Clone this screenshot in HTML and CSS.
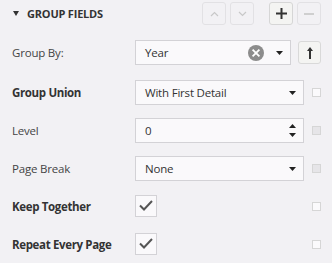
FILE: index.html
```html
<!DOCTYPE html>
<html lang="en">
<head>
    <meta charset="UTF-8">
    <title>Group Fields</title>
    <link rel="stylesheet" href="styles.css">
</head>
<body>
    <div class="panel">
        <div class="panel-header">
            <div class="panel-title">
                <svg class="collapse" width="6" height="5" viewBox="0 0 6 5"><path d="M0 0H6L3 5Z" fill="#333"/></svg>
                <span>GROUP FIELDS</span>
            </div>
            <div class="tools">
                <button class="tool-btn" disabled>
                    <svg width="9" height="6" viewBox="0 0 9 6"><path d="M1 5L4.5 1.5L8 5" fill="none" stroke="#c8c8c8" stroke-width="1.2"/></svg>
                </button>
                <button class="tool-btn" disabled>
                    <svg width="9" height="6" viewBox="0 0 9 6"><path d="M1 1L4.5 4.5L8 1" fill="none" stroke="#c8c8c8" stroke-width="1.2"/></svg>
                </button>
                <button class="tool-btn active gap-left">
                    <svg width="11" height="11" viewBox="0 0 11 11"><path d="M5.5 0V11M0 5.5H11" stroke="#333" stroke-width="2"/></svg>
                </button>
                <button class="tool-btn" disabled>
                    <svg width="10" height="2" viewBox="0 0 10 2"><path d="M0 1H10" stroke="#cfcfcf" stroke-width="2"/></svg>
                </button>
            </div>
        </div>

        <div class="row first">
            <label class="field-label">Group By:</label>
            <div class="control combo">
                <span class="value">Year</span>
                <svg class="clear" width="16" height="16" viewBox="0 0 16 16"><circle cx="8" cy="8" r="8" fill="#8c8c8c"/><path d="M4.6 4.6L11.4 11.4M11.4 4.6L4.6 11.4" stroke="#fff" stroke-width="1.8"/></svg>
                <svg class="caret" width="7" height="4" viewBox="0 0 7 4"><path d="M0 0H7L3.5 4Z" fill="#222"/></svg>
            </div>
            <button class="sort-btn">
                <svg width="6" height="12" viewBox="0 0 6 12"><path d="M3 0L6 4H4V12H2V4H0Z" fill="#333"/></svg>
            </button>
        </div>

        <div class="row second">
            <label class="field-label bold">Group Union</label>
            <div class="control select">
                <span class="value">With First Detail</span>
                <svg class="caret" width="7" height="4" viewBox="0 0 7 4"><path d="M0 0H7L3.5 4Z" fill="#222"/></svg>
            </div>
            <span class="mini-check"></span>
        </div>

        <div class="row">
            <label class="field-label">Level</label>
            <div class="control spin">
                <span class="value">0</span>
                <span class="spin-arrows">
                    <svg width="7" height="4" viewBox="0 0 7 4"><path d="M0 4H7L3.5 0Z" fill="#222"/></svg>
                    <svg width="7" height="4" viewBox="0 0 7 4"><path d="M0 0H7L3.5 4Z" fill="#222"/></svg>
                </span>
            </div>
            <span class="mini-check disabled"></span>
        </div>

        <div class="row">
            <label class="field-label">Page Break</label>
            <div class="control select">
                <span class="value">None</span>
                <svg class="caret" width="7" height="4" viewBox="0 0 7 4"><path d="M0 0H7L3.5 4Z" fill="#222"/></svg>
            </div>
            <span class="mini-check disabled"></span>
        </div>

        <div class="row">
            <label class="field-label bold">Keep Together</label>
            <div class="control-wide">
                <span class="checkbox">
                    <svg width="14" height="11" viewBox="0 0 14 11"><path d="M1 5.5L5 9.5L13 1" fill="none" stroke="#555" stroke-width="2"/></svg>
                </span>
            </div>
            <span class="mini-check"></span>
        </div>

        <div class="row">
            <label class="field-label bold">Repeat Every Page</label>
            <div class="control-wide">
                <span class="checkbox">
                    <svg width="14" height="11" viewBox="0 0 14 11"><path d="M1 5.5L5 9.5L13 1" fill="none" stroke="#555" stroke-width="2"/></svg>
                </span>
            </div>
            <span class="mini-check"></span>
        </div>
    </div>
</body>
</html>
```

FILE: styles.css
```css
* {
    margin: 0;
    padding: 0;
    box-sizing: border-box;
}

body {
    background: #f2f1f4;
    font-family: "Open Sans", "Noto Sans", sans-serif;
    font-size: 11.5px;
    letter-spacing: -0.2px;
    color: #333;
}

.panel {
    padding: 2px 11px 0 12px;
}

.panel-header {
    display: flex;
    justify-content: space-between;
    align-items: center;
    height: 23px;
}

.panel-title {
    display: flex;
    align-items: center;
    gap: 8px;
    padding-left: 1px;
    font-size: 11px;
    font-weight: 700;
    letter-spacing: -0.2px;
}

.tools {
    display: flex;
    gap: 4px;
}

.tool-btn {
    width: 24px;
    height: 23px;
    border: 1px solid #e2e1e4;
    border-radius: 3px;
    background: #f2f1f4;
    display: flex;
    align-items: center;
    justify-content: center;
}

.tool-btn.active {
    border-color: #d6d6d6;
    background: #f4f4f2;
}

.gap-left {
    margin-left: 11px;
}

.row {
    display: flex;
    align-items: center;
    height: 25px;
    margin-top: 13px;
}

.row.first,
.row.second {
    margin-top: 15px;
}

.field-label {
    width: 123px;
    color: #444;
}

.field-label.bold {
    font-weight: 700;
    letter-spacing: -0.35px;
    color: #333;
}

.control {
    height: 25px;
    border: 1px solid #d3d2d6;
    background: #faf9fb;
    display: flex;
    align-items: center;
    padding: 0 7px 0 9px;
    width: 169px;
}

.control .value {
    flex: 1;
}

.combo {
    width: 156px;
}

.combo .clear {
    margin-right: 12px;
}

.spin-arrows {
    display: flex;
    flex-direction: column;
    gap: 5px;
}

.sort-btn {
    width: 23px;
    height: 23px;
    margin-left: 7px;
    border: 1px solid #d9d9d9;
    border-radius: 3px;
    background: #f4f4f2;
    display: flex;
    align-items: center;
    justify-content: center;
}

.control-wide {
    width: 169px;
}

.checkbox {
    width: 22px;
    height: 22px;
    margin-bottom: 2px;
    border: 1px solid #d3d2d6;
    background: #faf9fb;
    display: flex;
    align-items: center;
    justify-content: center;
}

.mini-check {
    width: 9px;
    height: 9px;
    margin-left: 8px;
    border: 1px solid #d6d6d6;
    background: #fbfafc;
}

.mini-check.disabled {
    background: #e6e5e8;
}
```
